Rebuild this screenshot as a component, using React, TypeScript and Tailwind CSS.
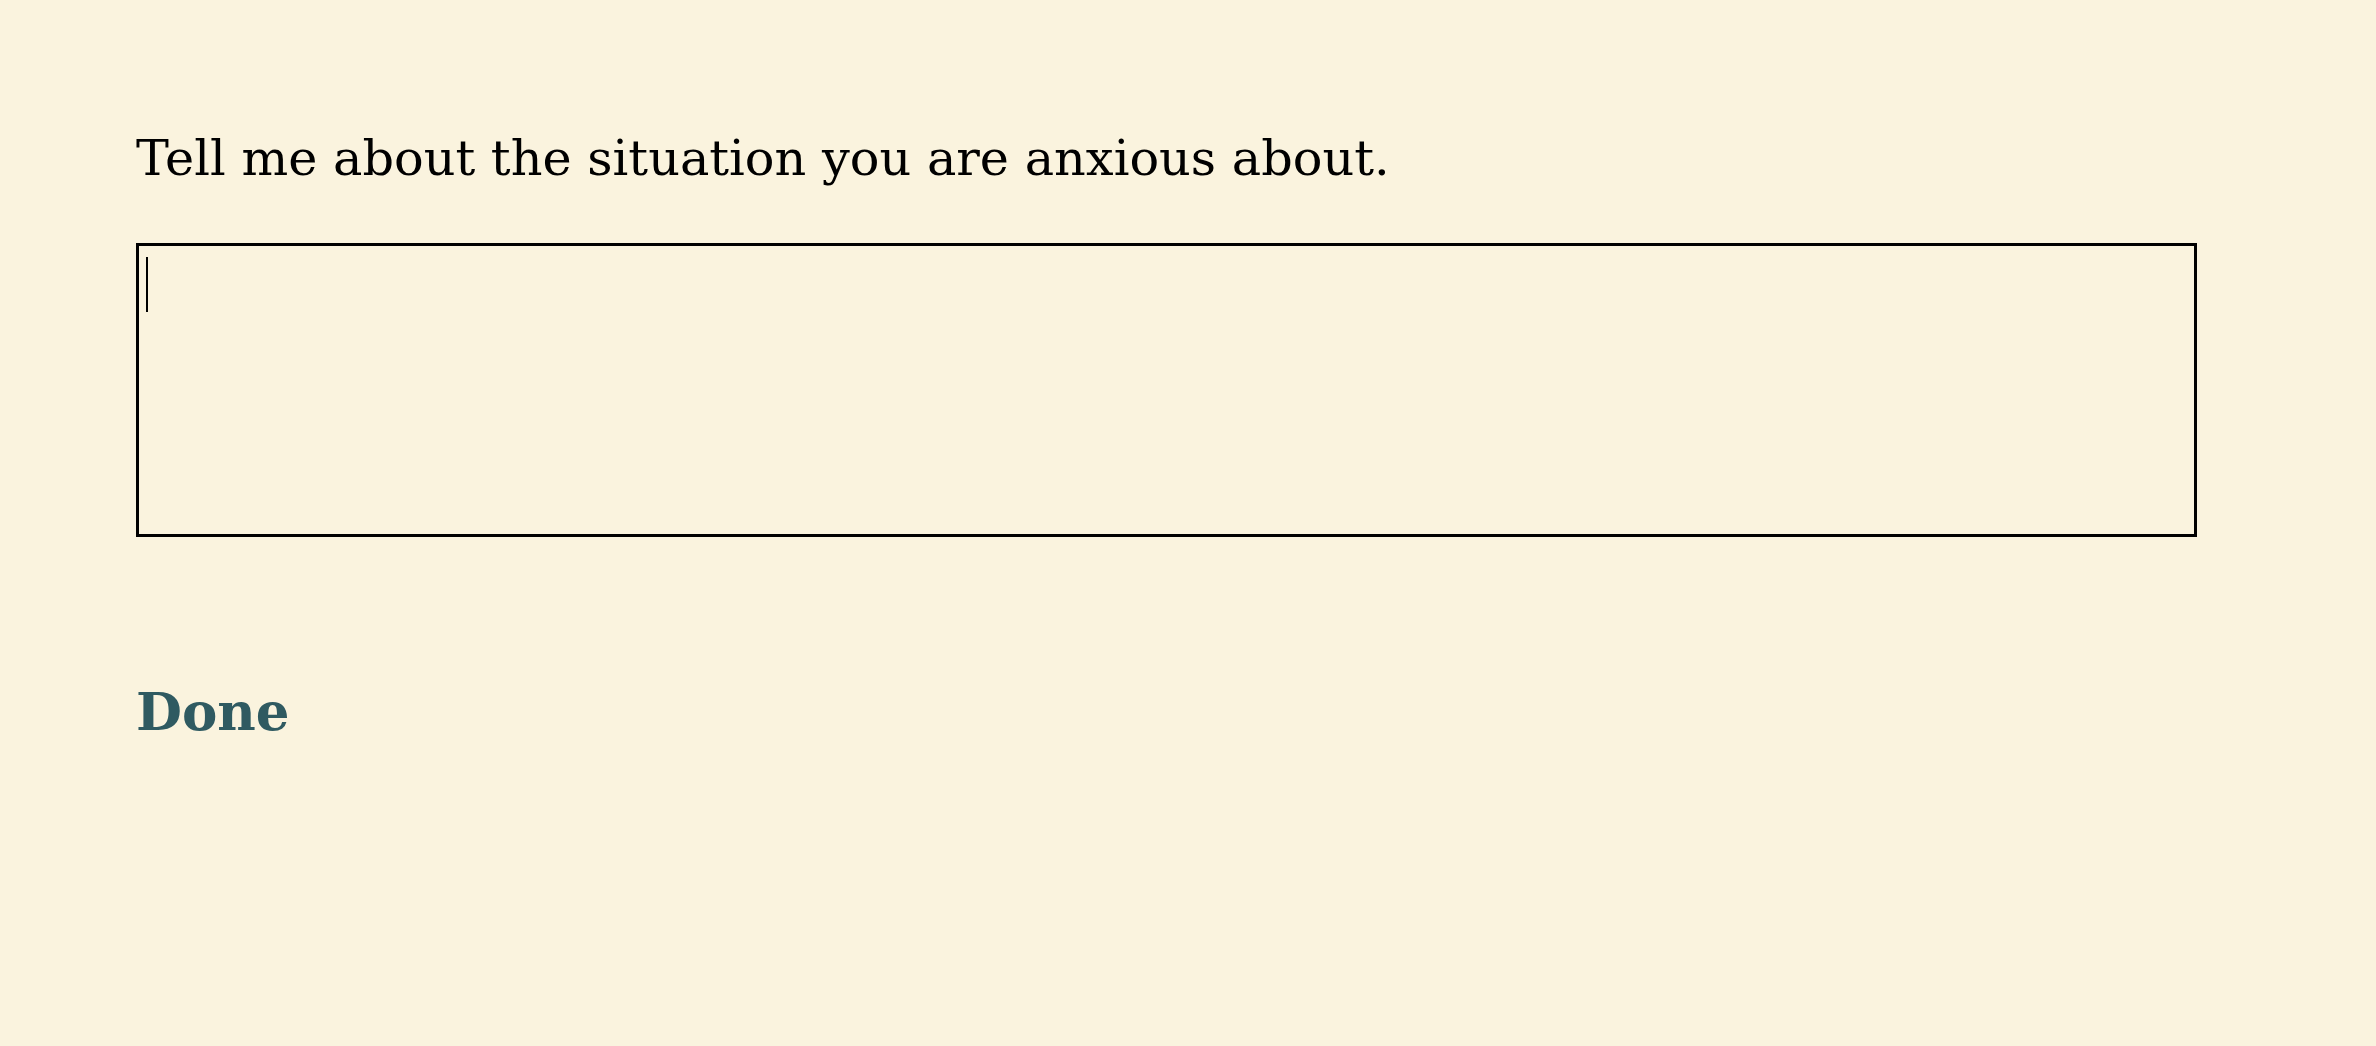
import { useState } from "react";

const serif = "font-['DejaVu_Serif',serif]";

const App = () => {
  const [text, setText] = useState("");

  return (
    <div className={`min-h-[1046px] w-full bg-[#faf3de] px-[136px] ${serif}`}>
      <p className="pt-[134px] text-[49.3px] leading-none text-black">
        Tell me about the situation you are anxious about.
      </p>
      <div className="relative mt-[60px] w-[2061px]">
        <textarea
          autoFocus
          value={text}
          onChange={(e) => setText(e.target.value)}
          className="block h-[294px] w-full resize-none border-[3px] border-black bg-transparent px-[7px] py-[8px] text-[49px] leading-none caret-transparent outline-none"
        />
        {text === "" && (
          <span className="pointer-events-none absolute left-[10px] top-[14px] h-[55px] w-[2px] bg-black" />
        )}
      </div>
      <button className="mt-[148px] block cursor-pointer text-[53px] font-bold leading-none text-[#2f5a61]">
        Done
      </button>
    </div>
  );
};

export default App;
